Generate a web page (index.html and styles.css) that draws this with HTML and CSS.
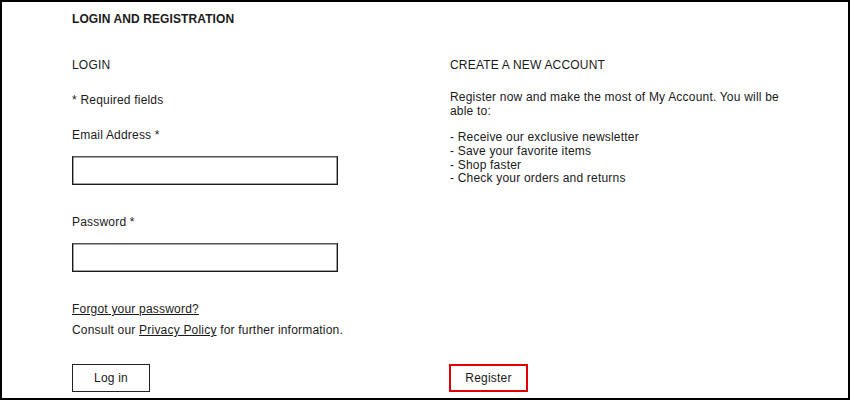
FILE: index.html
```html
<!DOCTYPE html>
<html lang="en">
<head>
<meta charset="utf-8">
<title>Login and Registration</title>
<link rel="stylesheet" href="styles.css">
</head>
<body>
<div class="frame">
  <h1 class="title">LOGIN AND REGISTRATION</h1>
  <div class="columns">
    <section class="col col-login">
      <h2 class="heading">LOGIN</h2>
      <p class="required">* Required fields</p>
      <label class="label" for="email">Email Address *</label>
      <input class="field" id="email" type="text">
      <label class="label label-pw" for="pw">Password *</label>
      <input class="field" id="pw" type="password">
      <a class="link forgot" href="#">Forgot your password?</a>
      <p class="consult">Consult our <a class="link" href="#">Privacy Policy</a> for further information.</p>
    </section>
    <section class="col col-register">
      <h2 class="heading">CREATE A NEW ACCOUNT</h2>
      <p class="intro">Register now and make the most of My Account. You will be able to:</p>
      <ul class="benefits">
        <li>- Receive our exclusive newsletter</li>
        <li>- Save your favorite items</li>
        <li>- Shop faster</li>
        <li>- Check your orders and returns</li>
      </ul>
    </section>
    <div class="col actions"><button class="btn">Log in</button></div>
    <div class="col actions"><button class="btn btn-register">Register</button></div>
  </div>
</div>
</body>
</html>
```
FILE: styles.css
```css
* { box-sizing: border-box; }
html, body { margin: 0; padding: 0; background: #fff; }
body {
  font-family: "Liberation Sans", Arial, sans-serif;
  font-size: 12px;
  color: #1a1a1a;
}
.frame {
  width: 850px;
  height: 400px;
  border: 2px solid #000;
  padding: 10px 0 0 70px;
  overflow: hidden;
}
.title {
  margin: 0;
  font-size: 12px;
  line-height: 14px;
  font-weight: bold;
  letter-spacing: 0.1px;
}
.columns {
  display: grid;
  grid-template-columns: 378px 380px;
  margin-top: 32px;
}
.col { display: flex; flex-direction: column; align-items: flex-start; }
.heading {
  margin: 0;
  font-size: 12px;
  line-height: 14px;
  font-weight: normal;
  letter-spacing: 0.2px;
}
.required, .label, .consult, .forgot, .intro, .benefits, .btn { letter-spacing: 0.2px; }
.required, .label, .consult { margin: 0; line-height: 14px; }
.required { margin-top: 21px; }
.label { margin-top: 21px; }
.label-pw { margin-top: 30px; }
.field {
  margin-top: 14px;
  width: 266px;
  height: 29px;
  border: 1px solid #1a1a1a;
  border-top-color: #555;
  box-shadow: inset 0 0 0 0.5px #444;
  background: #fff;
  padding: 0 6px;
  font: inherit;
}
.link { color: #1a1a1a; text-decoration: underline; line-height: 14px; }
.forgot { margin-top: 30px; }
.consult { margin-top: 7px; }
.intro {
  margin: 19px 0 0;
  line-height: 13.6px;
  width: 340px;
}
.benefits {
  list-style: none;
  margin: 13px 0 0;
  padding: 0;
  line-height: 13.7px;
}
.actions { margin-top: 27px; }
.btn {
  width: 78px;
  height: 28px;
  border: 1px solid #222;
  background: #fff;
  font: inherit;
  color: #1a1a1a;
  padding: 0;
  cursor: pointer;
}
.btn-register {
  width: 79px;
  border: 2px solid #e00000;
  margin-left: -1px;
}
```
